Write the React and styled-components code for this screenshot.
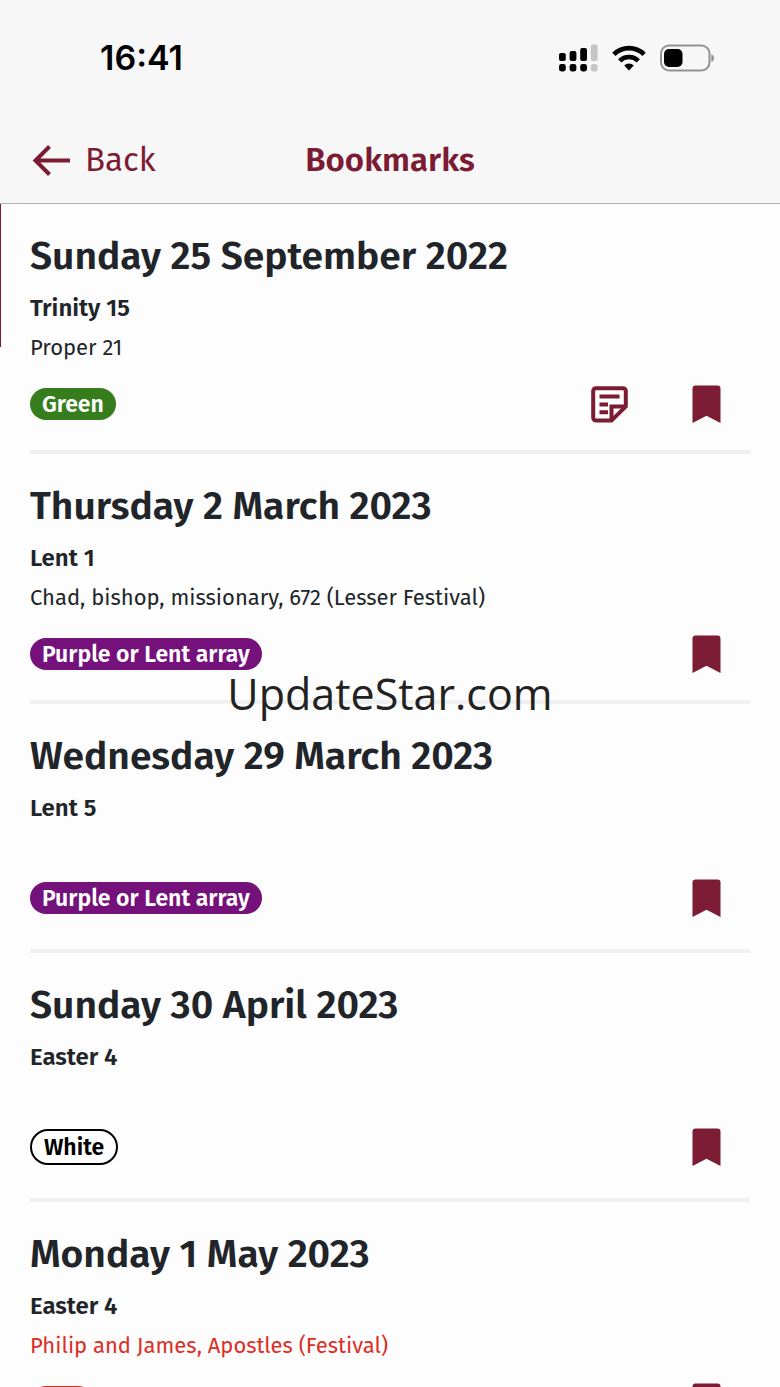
import styled, { createGlobalStyle } from "styled-components";

const GlobalStyle = createGlobalStyle`
  * {
    box-sizing: border-box;
  }
  body {
    margin: 0;
    background: #fdfdfd;
    color: #212529;
    font-family: 'Fira Sans', 'Noto Sans', sans-serif;
  }
  h1, h2, p, ul {
    margin: 0;
    padding: 0;
  }
`;

const Page = styled.div`
  position: relative;
  display: flex;
  flex-direction: column;
  height: 100vh;
  overflow: hidden;
`;

const Header = styled.header`
  flex: none;
  background: #f7f7f7;
  border-bottom: 1px solid #b5b2b3;
`;

const StatusBar = styled.div`
  display: flex;
  align-items: center;
  justify-content: space-between;
  height: 116px;
  padding: 0 65px 0 100px;
  color: #000;
`;

const Clock = styled.time`
  font-family: 'Inter', sans-serif;
  font-size: 34px;
  font-weight: 600;
  line-height: 40px;
`;

const StatusIcons = styled.div`
  display: flex;
  align-items: center;
  gap: 14px;
  svg {
    display: block;
  }
`;

const NavBar = styled.nav`
  display: grid;
  grid-template-columns: 1fr auto 1fr;
  align-items: center;
  height: 87px;
  padding: 0 32px;
  color: #7b1c34;
`;

const BackLink = styled.a`
  display: flex;
  align-items: center;
  gap: 14px;
  color: inherit;
  font-size: 33px;
  line-height: 40px;
  text-decoration: none;
`;

const PageTitle = styled.h1`
  font-size: 33px;
  font-weight: 600;
  line-height: 40px;
`;

const List = styled.ul`
  position: relative;
  flex: 1;
  min-height: 0;
  padding: 0 30px;
  list-style: none;
  overflow-y: auto;
  scrollbar-width: none;
  &::before {
    content: '';
    position: absolute;
    top: 0;
    left: 0;
    width: 1px;
    height: 143px;
    background: #7b1c34;
  }
`;

const Item = styled.li`
  min-height: 249px;
  padding: 26px 0 22px;
  border-bottom: 4px solid #f0f0f0;
`;

const DateTitle = styled.h2`
  font-size: 39px;
  font-weight: 600;
  line-height: 52px;
`;

const Week = styled.p`
  margin-top: 6px;
  font-size: 24px;
  font-weight: 600;
  line-height: 40px;
`;

const Detail = styled.p`
  min-height: 34px;
  color: ${({ $festival }) => ($festival ? '#dc2f26' : 'inherit')};
  font-size: 22px;
  line-height: 40px;
`;

const ItemFooter = styled.div`
  display: flex;
  align-items: center;
  justify-content: space-between;
  height: 48px;
  margin-top: 12px;
`;

const badgeColors = {
  green: { bg: '#367d1e', text: '#fff', border: '#367d1e' },
  purple: { bg: '#74117a', text: '#fff', border: '#74117a' },
  white: { bg: '#fff', text: '#000', border: '#000' },
  red: { bg: '#dc2f26', text: '#fff', border: '#dc2f26' },
};

const Badge = styled.span`
  padding: 0 12px;
  border: ${({ $color }) => ($color === 'white' ? '2px' : '0')} solid ${({ $color }) => badgeColors[$color].border};
  border-radius: 18px;
  background: ${({ $color }) => badgeColors[$color].bg};
  color: ${({ $color }) => badgeColors[$color].text};
  font-size: 23px;
  font-weight: 600;
  line-height: 32px;
`;

const Actions = styled.div`
  display: flex;
  align-items: center;
  gap: 64px;
  padding-right: 29px;
`;

const IconButton = styled.button`
  padding: 0;
  border: 0;
  background: none;
  color: #7b1c34;
  svg {
    display: block;
  }
`;

const Watermark = styled.div`
  position: absolute;
  top: 50%;
  left: 50%;
  transform: translate(-50%, -50%);
  color: #222;
  font-family: 'Segoe UI', 'Open Sans', sans-serif;
  font-size: 43px;
  line-height: 56px;
  pointer-events: none;
`;

const ArrowIcon = () => (
  <svg width="39" height="32" viewBox="0 0 39 32" fill="none" stroke="currentColor" strokeWidth="4">
    <path d="M38 16.5H3.5M17.5 2.5l-14 14 14 14" />
  </svg>
);

const SignalIcon = () => (
  <svg width="39" height="28" viewBox="0 0 39 28" fill="#000">
    <rect x="0" y="9" width="6.8" height="8" rx="2" />
    <rect x="10.6" y="7" width="6.8" height="10" rx="2" />
    <rect x="21.2" y="4" width="6.8" height="13" rx="2" />
    <rect x="31.8" y="0.5" width="6.8" height="16.5" rx="2" fill="#c5c5c5" />
    <rect x="0" y="20" width="6.8" height="7.4" rx="2.4" />
    <rect x="10.6" y="20" width="6.8" height="7.4" rx="2.4" />
    <rect x="21.2" y="20" width="6.8" height="7.4" rx="2.4" />
    <rect x="31.8" y="20" width="6.8" height="7.4" rx="2.4" fill="#c5c5c5" />
  </svg>
);

const WifiIcon = () => (
  <svg width="34" height="26" viewBox="0 0 34 26" fill="none" stroke="#000" strokeWidth="4.6">
    <path d="M1.9 9.3a21.5 21.5 0 0 1 30.2 0" />
    <path d="M7.7 15.8a13.4 13.4 0 0 1 18.6 0" />
    <path d="M17 25.6l-4.8-5.1a6.9 6.9 0 0 1 9.6 0z" fill="#000" stroke="none" />
  </svg>
);

const BatteryIcon = () => (
  <svg width="55" height="28" viewBox="0 0 55 28">
    <rect x="1" y="1.5" width="48.5" height="25" rx="8" fill="none" stroke="#929292" strokeWidth="2" />
    <rect x="4" y="5" width="18.5" height="18" rx="5" fill="#000" />
    <path d="M51.3 10.2c3.8 1.3 3.8 6.3 0 7.6z" fill="#929292" />
  </svg>
);

const NoteIcon = () => (
  <svg width="37" height="37" viewBox="0 0 37 37" fill="none" stroke="currentColor" strokeWidth="4">
    <path d="M5 2.2h27a2.8 2.8 0 0 1 2.8 2.8v15.5L20.5 34.6H5A2.8 2.8 0 0 1 2.2 31.8V5A2.8 2.8 0 0 1 5 2.2z" />
    <path d="M20.5 34v-13.5H34" />
    <path d="M8.5 10.5h20M8.5 18.5H17M8.5 26.3H17" />
  </svg>
);

const BookmarkIcon = () => (
  <svg width="29" height="38" viewBox="0 0 29 38" fill="currentColor">
    <path d="M3.5 0.5h22a3 3 0 0 1 3 3V38l-14-7.2L0.5 38V3.5a3 3 0 0 1 3-3z" />
  </svg>
);

const bookmarks = [
  { date: 'Sunday 25 September 2022', week: 'Trinity 15', detail: 'Proper 21', color: 'green', label: 'Green', note: true },
  { date: 'Thursday 2 March 2023', week: 'Lent 1', detail: 'Chad, bishop, missionary, 672 (Lesser Festival)', color: 'purple', label: 'Purple or Lent array' },
  { date: 'Wednesday 29 March 2023', week: 'Lent 5', color: 'purple', label: 'Purple or Lent array' },
  { date: 'Sunday 30 April 2023', week: 'Easter 4', color: 'white', label: 'White' },
  { date: 'Monday 1 May 2023', week: 'Easter 4', detail: 'Philip and James, Apostles (Festival)', festival: true, color: 'red', label: 'Red' },
];

const Bookmark = ({ item }) => (
  <Item>
    <DateTitle>{item.date}</DateTitle>
    <Week>{item.week}</Week>
    <Detail $festival={item.festival}>{item.detail}</Detail>
    <ItemFooter>
      <Badge $color={item.color}>{item.label}</Badge>
      <Actions>
        {item.note && (
          <IconButton type="button" aria-label="Note"><NoteIcon /></IconButton>
        )}
        <IconButton type="button" aria-label="Bookmark"><BookmarkIcon /></IconButton>
      </Actions>
    </ItemFooter>
  </Item>
);

const App = () => {
  return (
    <Page>
      <GlobalStyle />
      <Header>
        <StatusBar>
          <Clock>16:41</Clock>
          <StatusIcons>
            <SignalIcon />
            <WifiIcon />
            <BatteryIcon />
          </StatusIcons>
        </StatusBar>
        <NavBar>
          <BackLink href="#"><ArrowIcon />Back</BackLink>
          <PageTitle>Bookmarks</PageTitle>
        </NavBar>
      </Header>
      <List>
        {bookmarks.map((item) => (
          <Bookmark key={item.date} item={item} />
        ))}
      </List>
      <Watermark>UpdateStar.com</Watermark>
    </Page>
  );
}

export default App;
